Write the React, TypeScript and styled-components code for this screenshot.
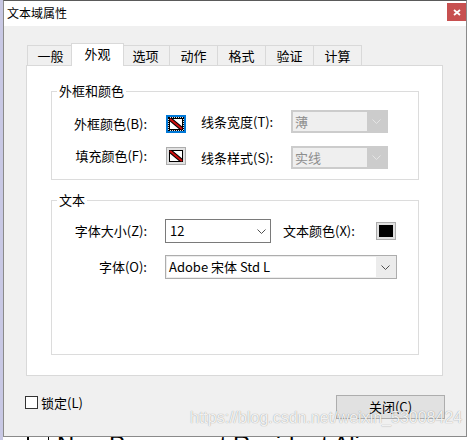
import React from "react";
import styled, { createGlobalStyle, css } from "styled-components";

const GlobalStyle = createGlobalStyle`
  html, body { margin: 0; padding: 0; }
  body { width: 470px; height: 440px; overflow: hidden; background: #fff; }
  * { box-sizing: border-box; }
`;

const UI_FONT = `"Noto Sans CJK SC", "Noto Sans", sans-serif`;

const Desktop = styled.div`
  position: relative;
  width: 470px;
  height: 440px;
  overflow: hidden;
  background: linear-gradient(to right, #c8c8e4 0 3px, #ffffff 3px);
`;

const DocRow = styled.div`
  display: flex;
  align-items: flex-start;
  padding-top: 431px;
  padding-left: 27px;
  font-family: "Liberation Sans", Arial, sans-serif;
  font-size: 24px;
  line-height: 28px;
  color: #000;
`;

const DocCell = styled.div`
  width: 22px;
  height: 20px;
  border-left: 2px solid #000;
  border-right: 1px solid #000;
  margin-right: 8px;
`;

const Window = styled.div`
  position: absolute;
  left: 3px;
  top: 0;
  width: 464px;
  height: 437px;
  display: flex;
  flex-direction: column;
  background: #f0f0f0;
  border: 1px solid #8a8a8a;
  border-top-color: #5a5a5a;
  font-family: ${UI_FONT};
  color: #000;
`;

const TitleBar = styled.div`
  flex: none;
  height: 25px;
  display: flex;
  align-items: flex-start;
  justify-content: space-between;
  background: #fff;
`;

const Title = styled.div`
  font-size: 12px;
  line-height: 16px;
  padding: 4px 0 0 3px;
`;

const CloseButton = styled.div`
  width: 19px;
  height: 18px;
  margin-top: 2px;
  background: #c75050;
  display: flex;
  align-items: center;
  justify-content: center;
`;

const Body = styled.div`
  flex: 1;
  display: flex;
  flex-direction: column;
  padding: 17px 23px 0 22px;
`;

const TabStrip = styled.div`
  display: flex;
  align-items: flex-end;
  height: 22px;
  padding-left: 1px;
  position: relative;
  z-index: 1;
`;

const Tab = styled.div<{ $active?: boolean }>`
  flex: none;
  width: 49px;
  height: 20px;
  margin-left: -1px;
  border: 1px solid #d9d9d9;
  border-bottom: none;
  background: #f0f0f0;
  font-size: 13px;
  line-height: 16px;
  display: flex;
  align-items: center;
  justify-content: center;
  &:first-child {
    width: 47px;
    margin-left: 0;
  }
  ${(p) =>
    p.$active &&
    css`
      width: 53px;
      height: 23px;
      margin: 0 -2px -1px -3px;
      padding-bottom: 2px;
      background: #fff;
      position: relative;
      z-index: 2;
    `}
`;

const Panel = styled.div`
  flex: none;
  width: 417px;
  height: 311px;
  background: #fff;
  border: 1px solid #d9d9d9;
  padding: 18px 23px 0 24px;
  display: flex;
  flex-direction: column;
`;

const Group = styled.fieldset<{ $padTop: number; $padBottom: number; $mt?: number }>`
  margin: ${(p) => p.$mt ?? 0}px 0 0 0;
  padding: ${(p) => p.$padTop}px 0 ${(p) => p.$padBottom}px 0;
  min-width: 0;
  border: 1px solid #dcdcdc;
`;

const Legend = styled.legend`
  margin-left: 5px;
  padding: 0 2px;
  font-size: 13px;
  line-height: 14px;
`;

const Columns = styled.div`
  display: flex;
  align-items: flex-start;
`;

const Stack = styled.div<{ $gap: number; $mt?: number }>`
  display: flex;
  flex-direction: column;
  gap: ${(p) => p.$gap}px;
  margin-top: ${(p) => p.$mt ?? 0}px;
`;

const Row = styled.div<{ $h: number }>`
  display: flex;
  align-items: center;
  height: ${(p) => p.$h}px;
`;

const FieldLabel = styled.div<{ $w: number; $ml?: number; $right?: boolean }>`
  flex: none;
  width: ${(p) => p.$w}px;
  margin-left: ${(p) => p.$ml ?? 0}px;
  text-align: ${(p) => (p.$right ? "right" : "left")};
  font-size: 13px;
  line-height: 16px;
  white-space: nowrap;
`;

const Swatch = styled.div<{ $focused?: boolean; $ml: number }>`
  flex: none;
  width: 20px;
  height: 18px;
  margin-left: ${(p) => p.$ml}px;
  display: flex;
  align-items: center;
  justify-content: center;
  background: #e1e1e1;
  border: ${(p) => (p.$focused ? "2px solid #0078d7" : "1px solid #adadad")};
`;

const FocusRing = styled.div`
  display: flex;
  border: 1px dotted #000;
`;

const Combo = styled.div<{ $w: number; $ml: number; $variant: "disabled" | "edit" | "list" }>`
  flex: none;
  width: ${(p) => p.$w}px;
  height: 100%;
  margin-left: ${(p) => p.$ml}px;
  display: flex;
  ${(p) =>
    p.$variant === "disabled"
      ? css`
          border: 1px solid #cccccc;
          background: #cccccc;
          padding: 1px;
        `
      : p.$variant === "edit"
      ? css`
          border: 1px solid #7a7a7a;
          background: #fff;
        `
      : css`
          border: 1px solid #adadad;
          background: #ececec;
          padding: 1px;
        `}
`;

const ComboField = styled.div<{ $variant: "disabled" | "edit" | "list" }>`
  flex: 1;
  display: flex;
  align-items: center;
  padding-left: ${(p) => (p.$variant === "edit" ? 4 : 2)}px;
  font-size: 13px;
  line-height: 16px;
  white-space: nowrap;
  color: ${(p) => (p.$variant === "disabled" ? "#8d8d8d" : "#000")};
  background: ${(p) => (p.$variant === "disabled" ? "#efefef" : "#fff")};
`;

const ComboArrow = styled.div<{ $w: number }>`
  flex: none;
  width: ${(p) => p.$w}px;
  display: flex;
  align-items: center;
  justify-content: center;
`;

const Footer = styled.div`
  display: flex;
  justify-content: space-between;
  align-items: flex-start;
  margin: 19px -2px 0 -1px;
`;

const CheckRow = styled.div`
  display: flex;
  align-items: center;
  gap: 3px;
  height: 13px;
  margin-top: 1px;
`;

const CheckBox = styled.div`
  width: 13px;
  height: 13px;
  border: 1px solid #333;
  background: #fff;
`;

const CheckLabel = styled.div`
  font-size: 13px;
  line-height: 16px;
`;

const PushButton = styled.div`
  width: 109px;
  height: 24px;
  background: #e1e1e1;
  border: 1px solid #adadad;
  font-size: 13px;
  line-height: 16px;
  display: flex;
  align-items: center;
  justify-content: center;
`;

const Watermark = styled.div`
  position: absolute;
  left: 190px;
  top: 410px;
  font-family: "Liberation Sans", Arial, sans-serif;
  font-size: 16px;
  line-height: 16px;
  color: rgba(255, 255, 255, 0.9);
  text-shadow: 0 0 1px rgba(0, 0, 0, 0.45);
  white-space: nowrap;
`;

const NoColorIcon = () => (
  <svg width="14" height="12" viewBox="0 0 14 12">
    <defs>
      <clipPath id="nc">
        <rect x="0" y="0" width="14" height="12" />
      </clipPath>
    </defs>
    <rect x="0.5" y="0.5" width="13" height="11" fill="#fff" stroke="#000" />
    <g clipPath="url(#nc)">
      <line x1="1" y1="1" x2="13" y2="11" stroke="#000" strokeWidth="4" />
      <line x1="1" y1="1" x2="13" y2="11" stroke="#d01010" strokeWidth="2" />
    </g>
  </svg>
);

const BlackIcon = () => (
  <svg width="14" height="12" viewBox="0 0 14 12">
    <rect x="0" y="0" width="14" height="12" fill="#000" />
  </svg>
);

const Chevron = ({ color }: { color: string }) => (
  <svg width="9" height="5" viewBox="0 0 9 5">
    <path d="M0.5 0.5 L4.5 4.5 L8.5 0.5" fill="none" stroke={color} strokeWidth="1" />
  </svg>
);

const tabs = ["一般", "外观", "选项", "动作", "格式", "验证", "计算"];

export default function App() {
  return (
    <Desktop>
      <GlobalStyle />
      <DocRow>
        <DocCell />
        <span>Non-Permanent Resident Alien</span>
      </DocRow>
      <Window>
        <TitleBar>
          <Title>文本域属性</Title>
          <CloseButton>
            <svg width="8" height="7" viewBox="0 0 8 7">
              <path d="M1 1 L7 6 M7 1 L1 6" stroke="#fff" strokeWidth="1.8" />
            </svg>
          </CloseButton>
        </TitleBar>
        <Body>
          <TabStrip>
            {tabs.map((t) => (
              <Tab key={t} $active={t === "外观"}>
                {t}
              </Tab>
            ))}
          </TabStrip>
          <Panel>
            <Group $padTop={12} $padBottom={10}>
              <Legend>外框和颜色</Legend>
              <Columns>
                <Stack $gap={14} $mt={5}>
                  <Row $h={18}>
                    <FieldLabel $w={95} $right>外框颜色(B):</FieldLabel>
                    <Swatch $ml={19} $focused>
                      <FocusRing>
                        <NoColorIcon />
                      </FocusRing>
                    </Swatch>
                  </Row>
                  <Row $h={18}>
                    <FieldLabel $w={95} $right>填充颜色(F):</FieldLabel>
                    <Swatch $ml={19}>
                      <NoColorIcon />
                    </Swatch>
                  </Row>
                </Stack>
                <Stack $gap={13}>
                  <Row $h={23}>
                    <FieldLabel $w={90} $ml={15}>线条宽度(T):</FieldLabel>
                    <Combo $w={97} $ml={0} $variant="disabled">
                      <ComboField $variant="disabled">薄</ComboField>
                      <ComboArrow $w={19}>
                        <Chevron color="#e4e4e4" />
                      </ComboArrow>
                    </Combo>
                  </Row>
                  <Row $h={23}>
                    <FieldLabel $w={90} $ml={15}>线条样式(S):</FieldLabel>
                    <Combo $w={97} $ml={0} $variant="disabled">
                      <ComboField $variant="disabled">实线</ComboField>
                      <ComboArrow $w={19}>
                        <Chevron color="#e4e4e4" />
                      </ComboArrow>
                    </Combo>
                  </Row>
                </Stack>
              </Columns>
            </Group>
            <Group $padTop={12} $padBottom={75} $mt={13}>
              <Legend>文本</Legend>
              <Stack $gap={12}>
                <Row $h={24}>
                  <FieldLabel $w={95} $right>字体大小(Z):</FieldLabel>
                  <Combo $w={106} $ml={18} $variant="edit">
                    <ComboField $variant="edit">12</ComboField>
                    <ComboArrow $w={17}>
                      <Chevron color="#505050" />
                    </ComboArrow>
                  </Combo>
                  <FieldLabel $w={93} $ml={12}>文本颜色(X):</FieldLabel>
                  <Swatch $ml={0}>
                    <BlackIcon />
                  </Swatch>
                </Row>
                <Row $h={24}>
                  <FieldLabel $w={95} $right>字体(O):</FieldLabel>
                  <Combo $w={232} $ml={18} $variant="list">
                    <ComboField $variant="list">Adobe 宋体 Std L</ComboField>
                    <ComboArrow $w={19}>
                      <Chevron color="#505050" />
                    </ComboArrow>
                  </Combo>
                </Row>
              </Stack>
            </Group>
          </Panel>
          <Footer>
            <CheckRow>
              <CheckBox />
              <CheckLabel>锁定(L)</CheckLabel>
            </CheckRow>
            <PushButton>关闭(C)</PushButton>
          </Footer>
        </Body>
      </Window>
      <Watermark>https://blog.csdn.net/weixin_53008424</Watermark>
    </Desktop>
  );
}
